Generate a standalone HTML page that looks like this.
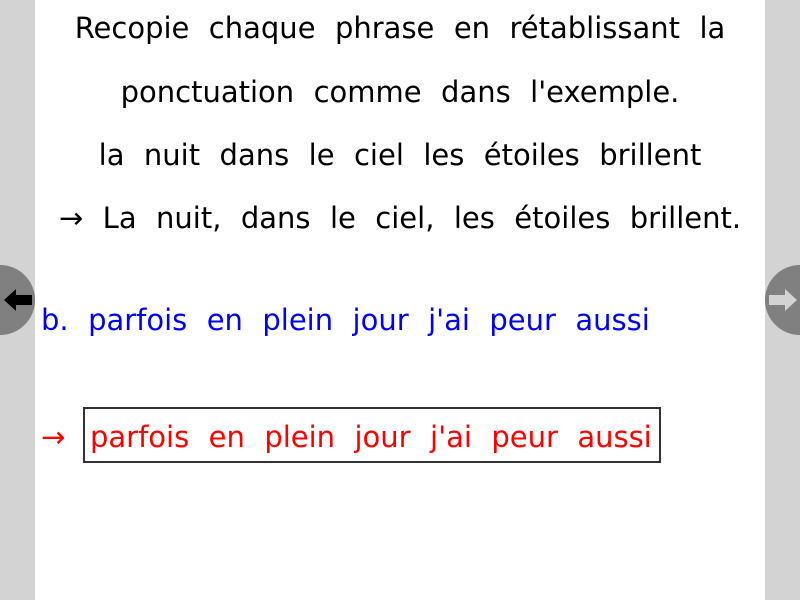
<!DOCTYPE html>
<html><head><meta charset="utf-8"><style>
body{margin:0;width:800px;height:600px;background:#fff;position:relative;overflow:hidden;font-family:"DejaVu Sans","Liberation Sans",sans-serif;}
.side{position:absolute;top:0;width:35px;height:600px;background:#d3d3d3}
.c{position:absolute;width:70px;height:70px;border-radius:50%;background:#808080;top:265px}
.t{position:absolute;white-space:pre;font-size:29px;line-height:36px;word-spacing:0.5px}
.ctr{left:35px;width:730px;text-align:center}
</style></head><body>
<div class="side" style="left:0"></div>
<div class="side" style="left:765px"></div>
<div class="c" style="left:-35px"></div>
<div class="c" style="left:765px"></div>
<svg style="position:absolute;left:2px;top:286px" width="32" height="28"><polygon points="2,14 14,3 14,9 30,9 30,19 14,19 14,25" fill="#000"/></svg>
<svg style="position:absolute;left:767px;top:286px" width="32" height="28"><polygon points="30,14 18,3 18,9 2,9 2,19 18,19 18,25" fill="#d3d3d3"/></svg>
<div class="t ctr" style="top:10px">Recopie  chaque  phrase  en  rétablissant  la</div>
<div class="t ctr" style="top:74px">ponctuation  comme  dans  l'exemple.</div>
<div class="t ctr" style="top:137px">la  nuit  dans  le  ciel  les  étoiles  brillent</div>
<div class="t ctr" style="top:200px">→  La  nuit,  dans  le  ciel,  les  étoiles  brillent.</div>
<div class="t" style="left:41px;top:302px;color:#0000ff">b.  parfois  en  plein  jour  j'ai  peur  aussi</div>
<div class="t" style="left:41px;top:419px;color:#ff0000">→</div>
<div style="position:absolute;left:84px;top:408px;width:574px;height:52px;border:2px solid #333;box-sizing:content-box;margin:-1px 0 0 -1px"></div>
<div class="t" style="left:90px;top:419px;color:#ff0000">parfois  en  plein  jour  j'ai  peur  aussi</div>
</body></html>
